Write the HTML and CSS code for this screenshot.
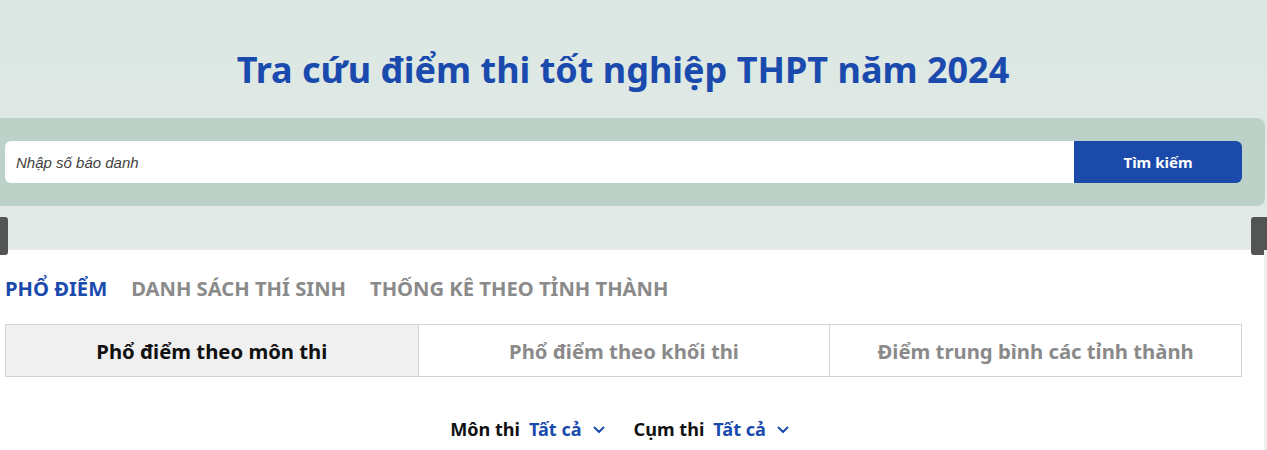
FILE: index.html
```html
<!DOCTYPE html>
<html lang="vi">
<head>
<meta charset="utf-8">
<title>Tra cứu điểm thi</title>
<link rel="stylesheet" href="styles.css">
</head>
<body>
<header class="hero">
  <h1 class="title">Tra cứu điểm thi tốt nghiệp THPT năm 2024</h1>
  <div class="search-panel">
    <div class="search-box">
      <input class="search-input" type="text" placeholder="Nhập số báo danh">
      <button class="search-btn">Tìm kiếm</button>
    </div>
  </div>
  <span class="side-tab side-left"></span>
  <span class="side-tab side-right"></span>
</header>
<main class="content">
  <nav class="tabs">
    <span class="tab active">PHỔ ĐIỂM</span>
    <span class="tab">DANH SÁCH THÍ SINH</span>
    <span class="tab">THỐNG KÊ THEO TỈNH THÀNH</span>
  </nav>
  <div class="subtabs">
    <div class="subtab active">Phổ điểm theo môn thi</div>
    <div class="subtab">Phổ điểm theo khối thi</div>
    <div class="subtab">Điểm trung bình các tỉnh thành</div>
  </div>
  <div class="filters">
    <div class="filter"><span class="f-label">Môn thi</span><span class="f-value">Tất cả</span>
      <svg class="chev" width="12" height="8" viewBox="0 0 12 8"><path d="M1.5 1.5 L6 6 L10.5 1.5" fill="none" stroke="#1a4aad" stroke-width="2" stroke-linecap="round" stroke-linejoin="round"/></svg></div>
    <div class="filter"><span class="f-label">Cụm thi</span><span class="f-value">Tất cả</span>
      <svg class="chev" width="12" height="8" viewBox="0 0 12 8"><path d="M1.5 1.5 L6 6 L10.5 1.5" fill="none" stroke="#1a4aad" stroke-width="2" stroke-linecap="round" stroke-linejoin="round"/></svg></div>
  </div>
</main>
<span class="scroll-strip"></span>
</body>
</html>
```
FILE: styles.css
```css
* { box-sizing: border-box; }
html, body { margin: 0; padding: 0; }
body {
  font-family: "Noto Sans", "Open Sans", sans-serif;
  background: #fff;
  width: 1267px;
  height: 450px;
  overflow: hidden;
  position: relative;
}
.hero {
  position: relative;
  height: 250px;
  background: linear-gradient(180deg, #dbe7e2 0%, #e4eae7 100%);
  padding-top: 46px;
}
.title {
  margin: 0;
  padding-right: 21px;
  text-align: center;
  font-size: 36px;
  font-weight: 700;
  color: #1a4aad;
  line-height: 48px;
  height: 72px;
}
.search-panel {
  width: 1265px;
  height: 88px;
  background: #bcd2c8;
  border-radius: 0 8px 8px 0;
  padding: 23px 23px 0 5px;
}
.search-box {
  display: flex;
  height: 42px;
}
.search-input {
  flex: 1;
  border: 0;
  outline: 0;
  height: 42px;
  border-radius: 6px 0 0 6px;
  background: #fff;
  padding: 0 11px;
  font-family: "Liberation Sans", Arial, sans-serif;
  font-style: italic;
  font-size: 15px;
  color: #333;
}
.search-input::placeholder { color: #3f3f3f; }
.search-btn {
  width: 168px;
  border: 0;
  height: 42px;
  border-radius: 0 6px 6px 0;
  background: #1b4aab;
  color: #fff;
  font-family: "Noto Sans", sans-serif;
  font-weight: 700;
  font-size: 15px;
}
.side-tab {
  position: absolute;
  top: 217px;
  height: 38px;
  background: #535554;
  border-radius: 0 3px 3px 0;
}
.side-left { left: 0; width: 8px; }
.side-right { left: 1251px; width: 16px; border-radius: 3px 0 0 3px; }
.scroll-strip {
  position: absolute;
  right: 0;
  top: 250px;
  width: 3px;
  height: 200px;
  background: #eef0ef;
}
.content { padding: 0 25px 0 5px; }
.tabs {
  display: flex;
  gap: 24px;
  padding-top: 24px;
  height: 74px;
}
.tab {
  font-size: 20.2px;
  font-weight: 700;
  color: #8a8a8a;
  line-height: 28px;
}
.tab.active { color: #1a4aad; }
.subtabs {
  display: grid;
  grid-template-columns: 1fr 1fr 1fr;
  border: 1px solid #d3d3d3;
  height: 53px;
}
.subtab {
  display: flex;
  align-items: center;
  justify-content: center;
  font-size: 20.3px;
  font-weight: 700;
  color: #8a8a8a;
  border-left: 1px solid #d3d3d3;
}
.subtab:first-child { border-left: 0; }
.subtab.active { background: #f0f0f0; color: #111; }
.filters {
  display: flex;
  justify-content: center;
  gap: 29px;
  padding-top: 39px;
  padding-right: 8px;
}
.filter {
  display: flex;
  align-items: center;
  font-size: 18.1px;
  font-weight: 700;
  line-height: 26px;
}
.f-label { color: #111; margin-right: 9px; }
.f-value { color: #1a4aad; margin-right: 11px; }
.chev { display: block; margin-top: 2px; }
```
